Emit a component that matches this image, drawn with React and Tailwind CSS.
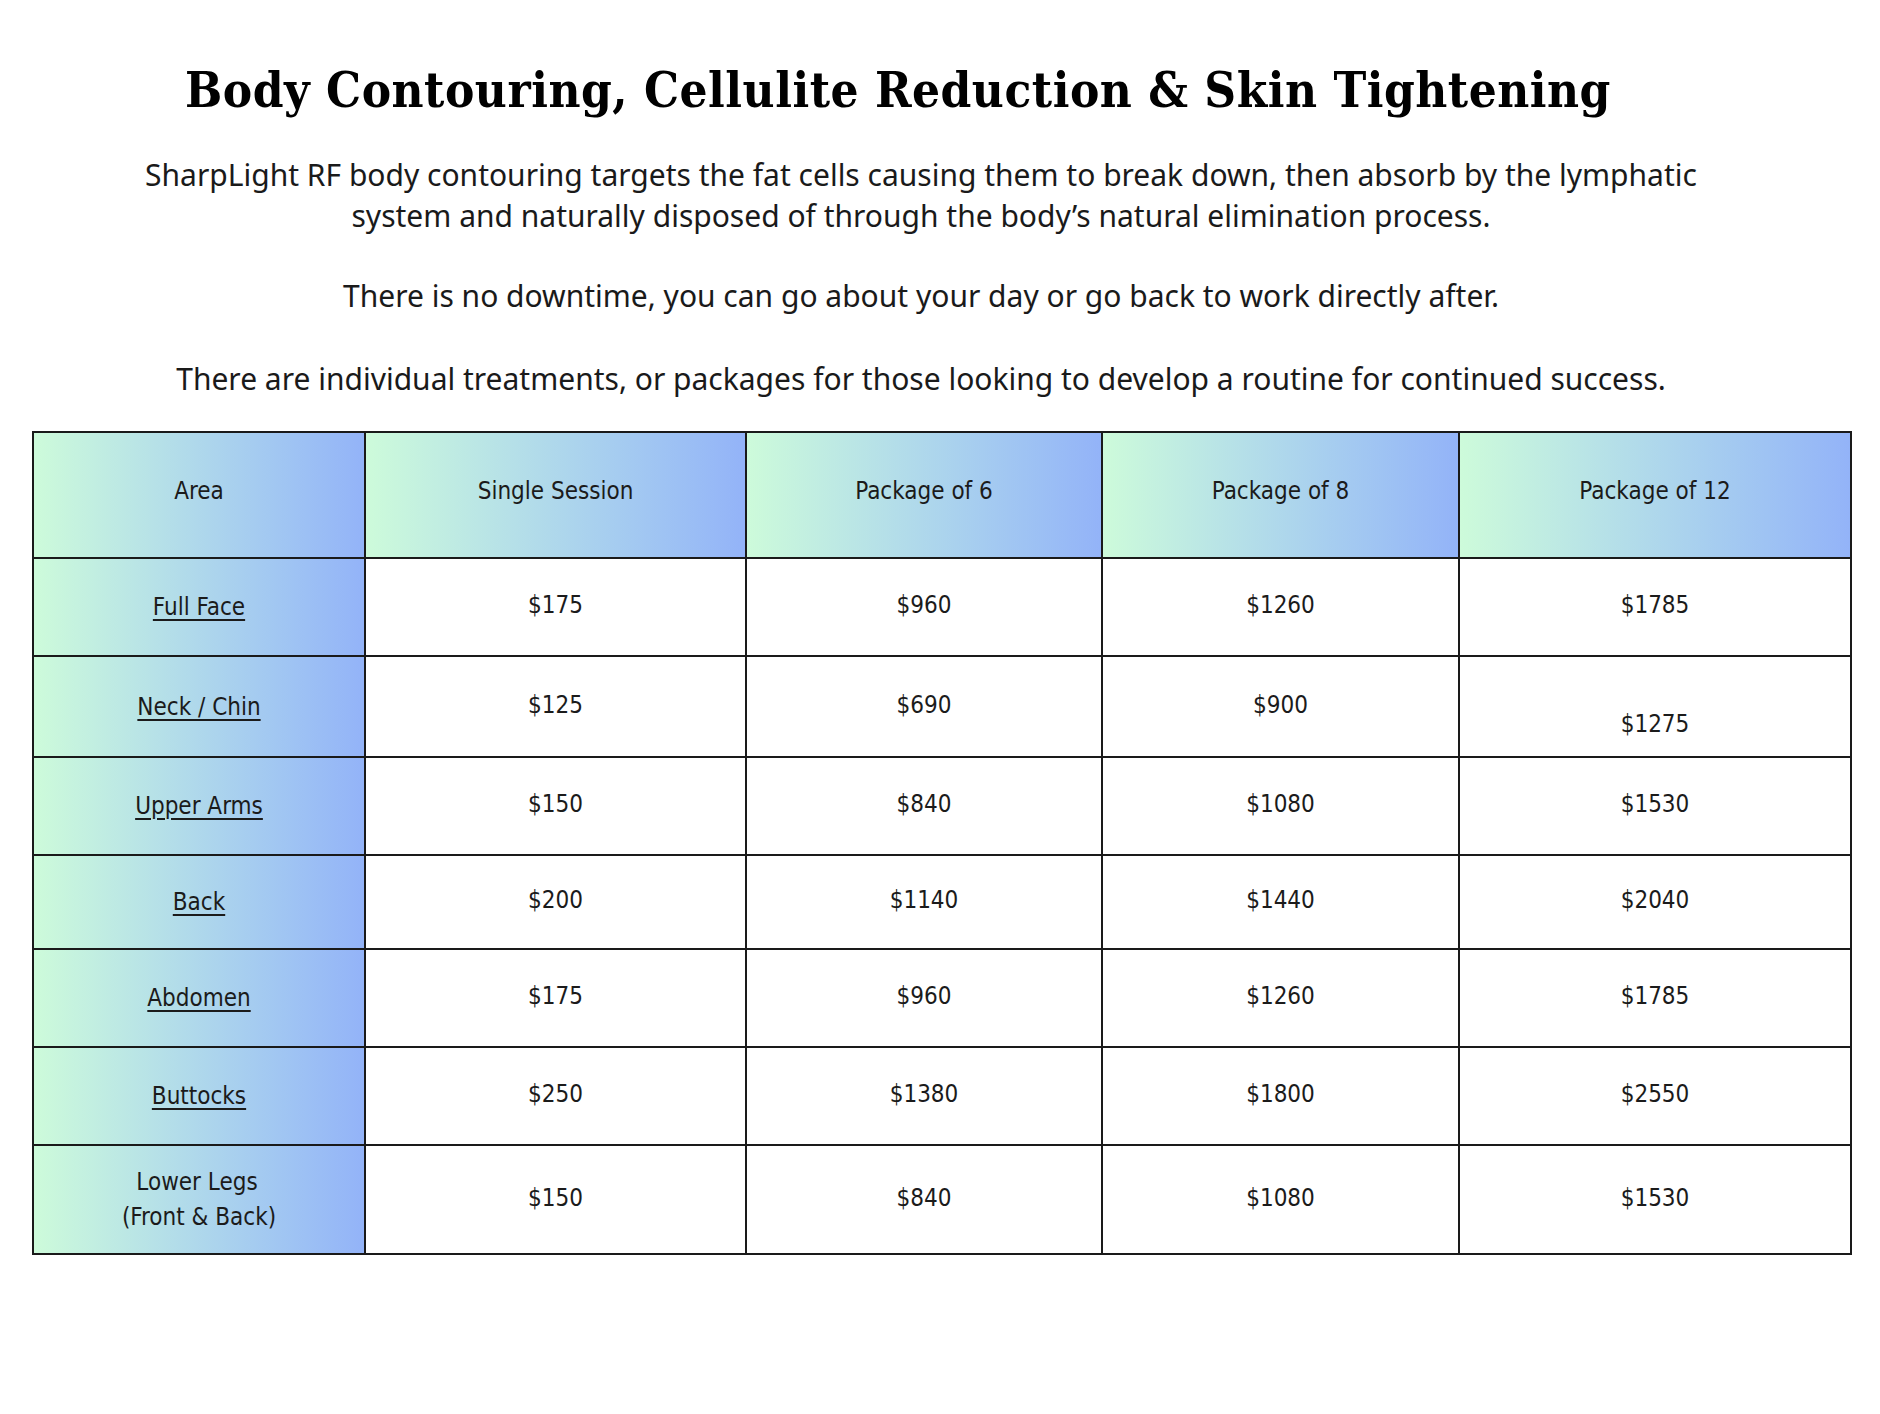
import React from "react";

const rows = [
  { area: "Full Face", link: true, prices: ["$175", "$960", "$1260", "$1785"], h: "h-[98px]" },
  { area: "Neck / Chin", link: true, prices: ["$125", "$690", "$900", "$1275"], h: "h-[101px]", lastLow: true },
  { area: "Upper Arms", link: true, prices: ["$150", "$840", "$1080", "$1530"], h: "h-[98px]" },
  { area: "Back", link: true, prices: ["$200", "$1140", "$1440", "$2040"], h: "h-[94px]" },
  { area: "Abdomen", link: true, prices: ["$175", "$960", "$1260", "$1785"], h: "h-[98px]" },
  { area: "Buttocks", link: true, prices: ["$250", "$1380", "$1800", "$2550"], h: "h-[98px]" },
  { area: "Lower Legs", sub: "(Front & Back)", prices: ["$150", "$840", "$1080", "$1530"], h: "h-[109px]" },
];

const headers = ["Area", "Single Session", "Package of 6", "Package of 8", "Package of 12"];

const grad = "bg-gradient-to-r from-[#cdfbda] to-[#93b3f8]";
const cellFont = "font-['Liberation_Sans_Narrow','DejaVu_Sans_Condensed',sans-serif] text-[24px] text-[#1b1b1b]";

export default function App() {
  return (
    <div className="min-h-[1414px] w-[1880px] bg-white">
      <div className="pt-[60px] pr-[84px] text-center">
        <h1 className="font-['DejaVu_Serif_Condensed','DejaVu_Serif',serif] text-[49px] font-bold leading-[60px] tracking-[0.5px] text-black">
          Body Contouring, Cellulite Reduction &amp; Skin Tightening
        </h1>
      </div>

      <div className="mt-[34px] pr-[38px] text-center font-['Noto_Sans',sans-serif] text-[30px] leading-[41px] text-[#1a1a1a]">
        <p>
          SharpLight RF body contouring targets the fat cells causing them to break down, then absorb by the lymphatic
          <br />
          system and naturally disposed of through the body’s natural elimination process.
        </p>
        <p className="mt-[39px]">There is no downtime, you can go about your day or go back to work directly after.</p>
        <p className="mt-[42px]">There are individual treatments, or packages for those looking to develop a routine for continued success.</p>
      </div>

      <div className="mt-[32px] pl-[32px]">
        <table className="w-[1818px] table-fixed border-collapse border-2 border-[#1a1a1a]">
          <colgroup>
            <col className="w-[332px]" />
            <col className="w-[381px]" />
            <col className="w-[356px]" />
            <col className="w-[357px]" />
            <col className="w-[392px]" />
          </colgroup>
          <thead>
            <tr className="h-[126px]">
              {headers.map((h) => (
                <th key={h} className={`border-2 border-[#1a1a1a] pb-[8px] text-center font-normal ${grad} ${cellFont}`}>
                  {h}
                </th>
              ))}
            </tr>
          </thead>
          <tbody>
            {rows.map((r) => (
              <tr key={r.area} className={r.h}>
                <td className={`border-2 border-[#1a1a1a] text-center ${grad} ${cellFont}`}>
                  {r.link ? (
                    <span className="underline decoration-[2px] underline-offset-[4px]">{r.area}</span>
                  ) : (
                    <div className="leading-[35px]">
                      <div className="pr-[4px]">{r.area}</div>
                      <div>{r.sub}</div>
                    </div>
                  )}
                </td>
                {r.prices.map((p, i) => (
                  <td
                    key={i}
                    className={`border-2 border-[#1a1a1a] text-center ${cellFont} ${
                      r.lastLow && i === 3 ? "pt-[34px]" : "pb-[4px]"
                    }`}
                  >
                    {p}
                  </td>
                ))}
              </tr>
            ))}
          </tbody>
        </table>
      </div>
    </div>
  );
}
